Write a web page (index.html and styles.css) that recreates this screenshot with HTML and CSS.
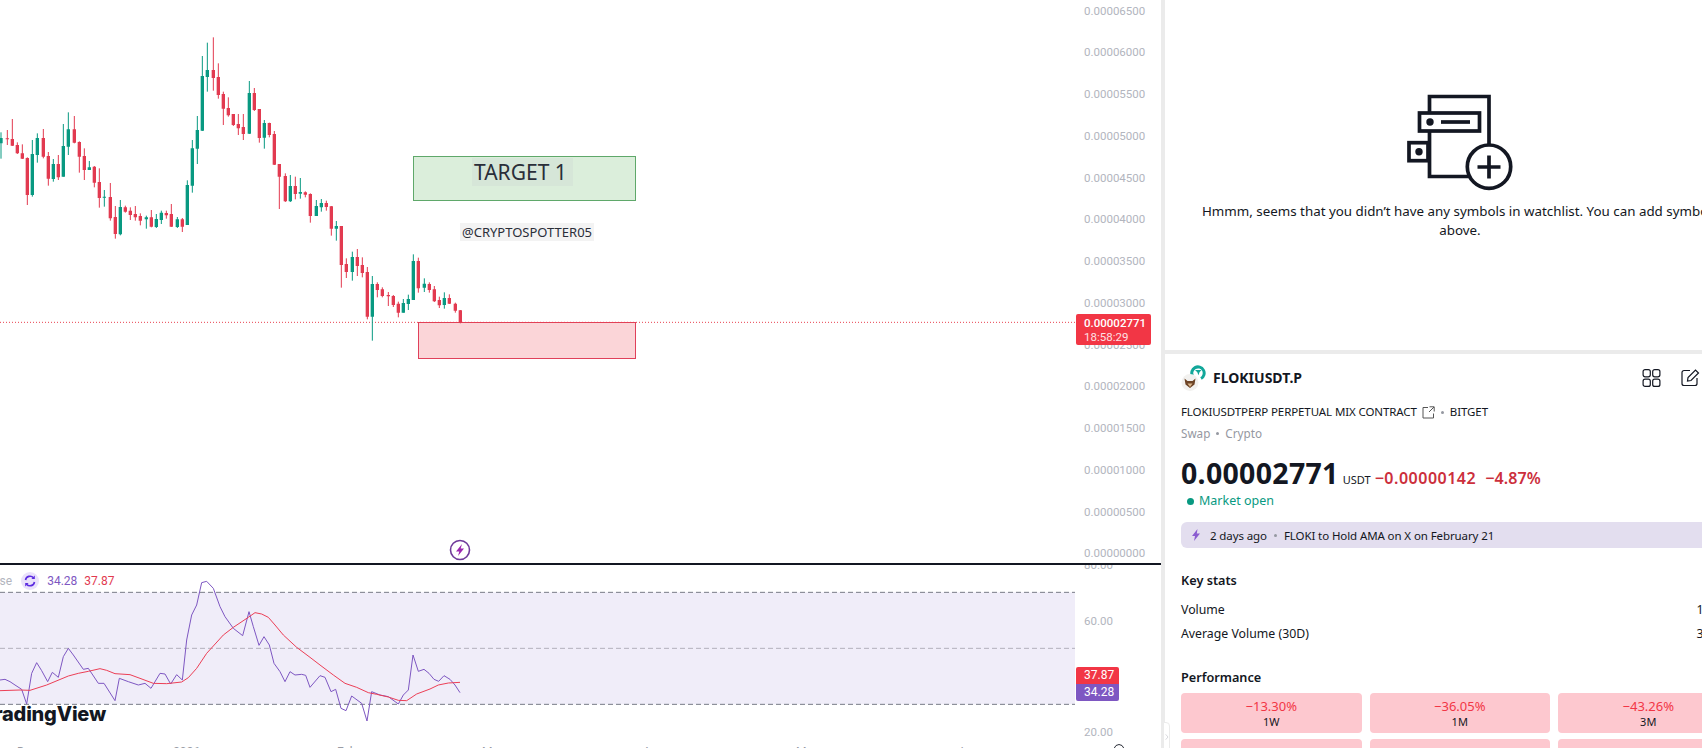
FILE: index.html
```html
<!DOCTYPE html>
<html lang="en">
<head>
<meta charset="utf-8">
<title>FLOKIUSDT.P chart</title>
<link rel="stylesheet" href="styles.css">
</head>
<body>
<div class="app">
  <section class="chart-col">
    <div class="main-pane">
      <div class="canvas">
        <div class="box box-green"></div>
        <div class="box box-red"></div>
        <svg class="plot" viewBox="0 0 3225 1689" aria-hidden="true">
          <line class="last-line" x1="0" y1="967" x2="3225" y2="967"/>
          <path class="wick up" d="M3 397V476M112 400V488M97 420V590M160 477V545M190 372V530M205 337V465M268 483V510M313 570V620M361 600V706M439 647V686M469 642V684M484 632V672M532 651V684M562 541V675M577 420V578M592 348V492M607 168V393M622 128V275M748 243V402M793 360V446M871 525V606M901 534V596M949 600V648M964 597V635M1009 663V722M1057 755V842M1117 828V1022M1210 897V938M1225 884V930M1240 763V900M1273 835V876M1333 877V926"/>
          <path class="body up" d="M3 414V430M97 462V585M112 414V465M160 492V537M190 438V530M205 388V440M268 502V510M313 590V593M361 621V703M439 652V658M469 657V681M484 638V660M532 658V681M562 555V675M577 445V557M592 390V446M607 228V392M622 210V231M748 279V401M793 369V413M871 558V604M901 576V581M949 618V648M964 609V622M1009 678V686M1057 771V816M1117 852V950M1210 909V938M1225 897V912M1240 783V900M1273 851V863M1333 894V915"/>
          <path class="wick down" d="M22 390V435M37 357V438M52 427V462M67 433V477M82 472V615M130 387V475M145 456V557M175 465V540M223 348V430M238 424V518M253 445V540M283 498V562M298 505V623M331 549V662M346 618V716M376 617V638M391 622V660M406 618V662M421 640V676M454 630V682M499 632V656M514 612V681M547 654V696M640 112V272M655 190V296M670 275V375M685 292V350M700 342V378M715 342V405M730 342V420M763 264V333M778 327V428M808 368V412M823 393V495M838 492V627M856 520V606M886 530V598M916 574V592M931 580V668M979 602V632M994 618V707M1024 678V863M1039 775V834M1072 747V828M1087 772V832M1102 801V958M1132 847V892M1147 862V892M1165 876V918M1180 885V921M1195 905V952M1255 773V878M1288 847V878M1303 858V906M1318 890V924M1348 883V912M1366 908V938M1381 930V970"/>
          <path class="body down" d="M22 415V418M37 417V437M52 435V460M67 460V476M82 474V585M130 414V470M145 468V536M175 492V532M223 388V428M238 426V470M253 468V510M283 500V548M298 546V594M331 591V655M346 651V702M376 622V635M391 632V645M406 642V652M421 648V662M454 652V680M499 639V646M514 642V680M547 658V680M640 210V234M655 231V285M670 282V326M685 324V346M700 342V375M715 372V385M730 381V402M763 279V330M778 327V414M808 369V405M823 402V494M838 492V530M856 528V604M886 558V582M916 577V584M931 582V648M979 609V621M994 619V686M1024 678V795M1039 792V816M1072 771V798M1087 795V819M1102 816V950M1132 852V870M1147 868V888M1165 885V889M1180 888V915M1195 911V938M1255 783V865M1288 852V870M1303 868V904M1318 900V916M1348 894V911M1366 911V932M1381 931V968"/>
        </svg>
        <span class="note note-target">TARGET 1</span>
        <span class="note note-handle">@CRYPTOSPOTTER05</span>
        <svg class="event" viewBox="0 0 22 22" aria-hidden="true">
          <circle cx="11" cy="11" r="9.5"/>
          <path d="M13 5 7 12.500h3.300L9 17l6-7.500h-3.300z"/>
        </svg>
      </div>
      <div class="price-axis">
        <span>0.00006500</span><span>0.00006000</span><span>0.00005500</span><span>0.00005000</span>
        <span>0.00004500</span><span>0.00004000</span><span>0.00003500</span><span>0.00003000</span>
        <span>0.00002500</span><span>0.00002000</span><span>0.00001500</span><span>0.00001000</span>
        <span>0.00000500</span><span>0.00000000</span>
        <div class="price-tag"><b>0.00002771</b><span>18:58:29</span></div>
      </div>
    </div>
    <div class="pane-sep"></div>
    <div class="rsi-pane">
      <div class="canvas">
        <svg class="plot" viewBox="0 75 3225 549" aria-hidden="true">
          <rect class="band" x="0" y="157" width="3225" height="336"/>
          <line class="dash dark" x1="0" y1="157" x2="3225" y2="157"/>
          <line class="dash light" x1="0" y1="325" x2="3225" y2="325"/>
          <line class="dash dark" x1="0" y1="493" x2="3225" y2="493"/>
          <polyline class="rsi" points="0,420 15,418 30,425 45,435 65,448 80,492 95,400 110,368 125,392 143,425 157,397 175,412 190,350 205,325 220,345 250,388 265,385 295,430 312,430 345,482 358,415 385,425 415,435 435,430 453,445 480,400 495,402 512,432 530,404 547,420 560,300 575,225 590,195 605,128 620,124 640,145 660,200 675,230 700,265 728,287 747,215 760,260 777,316 792,290 808,315 822,370 840,395 855,425 870,395 885,405 905,403 917,406 930,442 960,407 975,412 993,455 1007,448 1023,505 1038,512 1055,468 1085,490 1101,543 1115,455 1140,465 1165,470 1195,492 1210,465 1225,450 1239,345 1255,394 1272,388 1287,400 1302,418 1316,424 1332,407 1350,418 1365,435 1380,458"/>
          <polyline class="rsi-ma" points="0,452 30,451 60,450 90,451 140,435 205,408 235,400 265,394 300,386 320,391 345,401 390,404 420,415 460,430 500,431 545,426 565,413 590,385 620,340 670,285 700,262 745,232 765,218 785,222 805,232 825,255 850,285 890,322 930,352 960,375 1000,405 1035,430 1070,442 1105,458 1130,463 1165,471 1195,481 1220,482 1250,462 1290,447 1315,435 1345,429 1380,427"/>
        </svg>
        <div class="legend">
          <span class="legend-src">Close</span>
          <svg class="sync" viewBox="0 0 18 18" aria-hidden="true">
            <circle class="sync-bg" cx="9" cy="9" r="9"/>
            <path class="sync-arc" d="M4.500 8a4.600 4.600 0 0 1 8-2.200M13.500 10a4.600 4.600 0 0 1-8 2.200"/>
            <path class="sync-tip" d="M13.800 3.600v3.400h-3.400zM4.200 14.400V11h3.400z"/>
          </svg>
          <span class="legend-rsi">34.28</span>
          <span class="legend-ma">37.87</span>
        </div>
        <div class="watermark">TradingView</div>
        <div class="time-axis">
          <span class="t-dec">Dec</span><span class="t-2026">2026</span><span class="t-feb">Feb</span>
          <span class="t-mar">Mar</span><span class="t-apr">Apr</span><span class="t-may">May</span><span class="t-jun">Jun</span>
        </div>
      </div>
      <div class="rsi-axis">
        <span>80.00</span><span>60.00</span><span>40.00</span><span>20.00</span>
        <div class="rsi-tags"><span class="tag-ma">37.87</span><span class="tag-rsi">34.28</span></div>
        <svg class="gear" viewBox="0 0 12 12" aria-hidden="true"><path d="M3 1.500 6 .5l3 1 2 3v7H1v-7z"/></svg>
      </div>
    </div>
  </section>
  <div class="v-divider"><div class="collapse"><svg viewBox="0 0 6 10" aria-hidden="true"><path d="M1 1l3.500 4L1 9"/></svg></div></div>
  <aside class="side">
    <section class="watchlist">
      <svg class="empty-icon" viewBox="0 0 108 98" aria-hidden="true">
        <path class="ei" d="M22.500 46V3.500H82v60M22.500 46V83.500H66"/>
        <rect class="ei fillw" x="12.500" y="20" width="60" height="18"/>
        <circle class="ed" cx="23" cy="29" r="3.700"/>
        <path class="ei" d="M34 29H63"/>
        <rect class="ei" x="2" y="49.700" width="19" height="18"/>
        <circle class="ed" cx="12" cy="58.700" r="3.700"/>
        <circle class="ei fillw" cx="82" cy="73.700" r="21.700"/>
        <path class="ei" d="M70.500 74H93.500M82 62.500V85.500"/>
      </svg>
      <p class="empty-msg">Hmmm, seems that you didn’t have any symbols in watchlist. You can add symbols above.</p>
    </section>
    <div class="h-divider"></div>
    <section class="details">
      <header class="sym-row">
        <svg class="sym-logo" viewBox="0 0 26 26" aria-hidden="true">
          <path class="logo-ring" d="M11.500 11a6.200 6.200 0 1 1 8.500 2.500"/>
          <path class="logo-arrow" d="M14 5h6.500l-2 2.200-1 3-1.200-3z"/>
          <circle cx="9" cy="17.500" r="8.500" fill="#f2f1ef"/>
          <path d="M3.500 13.500 6.500 16h5l3-2.500-1 6L9 23l-4.500-3.500z" fill="#6e4427"/>
          <path d="M6.500 18.500h5L9 22z" fill="#d9b68c"/>
        </svg>
        <h2 class="sym-name">FLOKIUSDT.P</h2>
        <div class="sym-actions">
          <svg class="act" viewBox="0 0 18 18" aria-hidden="true"><rect x=".6" y=".6" width="7.200" height="7.200" rx="2"/><rect x="10.200" y=".6" width="7.200" height="7.200" rx="2"/><rect x=".6" y="10.200" width="7.200" height="7.200" rx="2"/><rect x="10.200" y="10.200" width="7.200" height="7.200" rx="2"/></svg>
          <svg class="act" viewBox="0 0 19 18" aria-hidden="true"><path d="M9 1.500H3a2 2 0 0 0-2 2v11a2 2 0 0 0 2 2h11a2 2 0 0 0 2-2V9"/><path d="M6.500 12 7 8.500 14.500 1l3 3L10 11.500z"/></svg>
        </div>
      </header>
      <div class="contract">
        <span>FLOKIUSDTPERP PERPETUAL MIX CONTRACT</span>
        <svg class="ext" viewBox="0 0 13 13" aria-hidden="true"><path d="M6 1.500H1v10.500h10.500V7.500M7.500.8h4.700v4.700M12 1 7 6"/></svg>
        <i class="dot"></i>
        <span>BITGET</span>
      </div>
      <div class="type"><span>Swap</span><i class="dot"></i><span>Crypto</span></div>
      <div class="quote">
        <span class="last">0.00002771</span>
        <span class="ccy">USDT</span>
        <span class="chg">−0.00000142</span>
        <span class="chg">−4.87%</span>
      </div>
      <div class="status"><i></i>Market open</div>
      <div class="news">
        <svg class="bolt" viewBox="0 0 8 12" aria-hidden="true"><path d="M5.500 0 0 7h3l-1 5 6-7.500H4.800z"/></svg>
        <span>2 days ago</span><i class="dot"></i><span>FLOKI to Hold AMA on X on February 21</span>
      </div>
      <h3 class="sec-title">Key stats</h3>
      <div class="stat"><span>Volume</span><span>15.36 B</span></div>
      <div class="stat"><span>Average Volume (30D)</span><span>39.52 B</span></div>
      <h3 class="sec-title perf-title">Performance</h3>
      <div class="perf-grid">
        <div class="perf"><b>−13.30%</b><span>1W</span></div>
        <div class="perf"><b>−36.05%</b><span>1M</span></div>
        <div class="perf"><b>−43.26%</b><span>3M</span></div>
        <div class="perf"></div>
        <div class="perf"></div>
        <div class="perf"></div>
      </div>
    </section>
  </aside>
</div>
</body>
</html>
```
FILE: styles.css
```css
* { box-sizing: border-box; }
html, body { margin: 0; height: 100%; overflow: hidden; background: #fff; }
body { font-family: "Noto Sans", sans-serif; color: #131722; }

.app { display: flex; width: 1702px; height: 748px; overflow: hidden; }

/* chart column */
.chart-col { flex: 0 0 1161px; display: flex; flex-direction: column; height: 748px; }
.main-pane { flex: 0 0 563px; display: flex; }
.pane-sep { flex: 0 0 2px; background: #131722; }
.rsi-pane { flex: 1; display: flex; overflow: hidden; }
.canvas { position: relative; flex: 0 0 1075px; overflow: hidden; }
.plot { position: absolute; inset: 0; width: 100%; height: 100%; }

.last-line { stroke: #e8404f; stroke-width: 3; stroke-dasharray: 3 6; }
.wick { fill: none; stroke-width: 3; }
.body { fill: none; stroke-width: 10; }
.up { stroke: #089981; }
.down { stroke: #e23a50; }

.box { position: absolute; left: 413px; width: 223px; }
.box-green { top: 156px; height: 45px; background: #dbeedb; border: 1px solid #5fa86a; }
.box-red { top: 322px; left: 418px; width: 218px; height: 37px; background: #fbd5d8; border: 1px solid #e0405a; }

.note { position: absolute; white-space: nowrap; color: #2a2e39; }
.note-target { top: 158px; left: 472px; padding: 0 6px 0 2px; font-size: 21px; line-height: 28px; background: #d6e6d8; }
.note-handle { top: 223px; left: 460px; padding: 0 2px; font-size: 13px; line-height: 18px; background: #f3f3f3; }

.event { position: absolute; left: 449px; top: 539px; width: 22px; height: 22px; }
.event circle { fill: #fff; stroke: #6f3a9a; stroke-width: 1.6; }
.event path { fill: #9c27b0; }

/* price axis */
.price-axis { position: relative; flex: 1; display: flex; flex-direction: column; gap: 27.75px; padding: 3.7px 0 0 9px;
  font: 11.5px/14px Roboto, sans-serif; color: #b2b5be; }
.price-tag { position: absolute; left: 1px; top: 314px; width: 75px; height: 31px; padding: 3px 0 0 8px; background: #f23645; border-radius: 2px;
  color: #fff; display: flex; flex-direction: column; line-height: 13.5px; }
.price-tag b { font-weight: 500; }
.price-tag span { color: #fde0e3; }

/* RSI pane */
.band { fill: #f0edf9; }
.dash { stroke-width: 3; stroke-dasharray: 15 9; }
.dark { stroke: #787b86; }
.light { stroke: #b2b0bc; }
.rsi { fill: none; stroke: #7e57c2; stroke-width: 3; }
.rsi-ma { fill: none; stroke: #ec3f56; stroke-width: 3; }

.legend { position: absolute; left: -18px; top: 7px; display: flex; align-items: center; gap: 7px; font: 12px/14px Roboto, sans-serif; }
.legend-src { color: #b2b5be; }
.sync { width: 18px; height: 18px; margin: 0 1px 0 2px; }
.sync-bg { fill: #e9e1fb; }
.sync-arc { fill: none; stroke: #5b2be0; stroke-width: 1.6; }
.sync-tip { fill: #5b2be0; }
.legend-rsi { color: #7e57c2; }
.legend-ma { color: #e23a50; }

.watermark { position: absolute; right: calc(100% - 106px); top: 136px; font: 800 20px/26px Inter, sans-serif; color: #131722; white-space: nowrap; letter-spacing: -.2px; }

.time-axis { position: absolute; inset: 180px 0 auto 0; height: 14px; font: 12px/14px Roboto, sans-serif; color: #999ca5; }
.time-axis span { position: absolute; top: 0; }
.t-dec { left: 17px; }
.t-2026 { left: 173px; }
.t-feb { left: 337px; }
.t-mar { left: 482px; }
.t-apr { left: 643px; }
.t-may { left: 796px; }
.t-jun { left: 957px; }

.rsi-axis { position: relative; flex: 1; display: flex; flex-direction: column; gap: 41.7px; padding-left: 9px; margin-top: -7px;
  font: 11.5px/14px Roboto, sans-serif; color: #b2b5be; }
.rsi-tags { position: absolute; left: 1px; top: 109px; width: 43px; display: flex; flex-direction: column; color: #fff; font-size: 12px; }
.rsi-tags span { height: 17px; line-height: 17px; padding-left: 8px; }
.tag-ma { background: #f23645; border-radius: 2px 2px 0 0; }
.tag-rsi { background: #7e57c2; border-radius: 0 0 2px 2px; }
.gear { position: absolute; left: 38px; top: 186px; width: 12px; height: 12px; fill: none; stroke: #2a2e39; stroke-width: 1; }

/* dividers */
.v-divider { position: relative; flex: 0 0 4px; background: #ebebeb; }
.h-divider { flex: 0 0 4px; background: #ebebeb; }
.collapse { position: absolute; left: 2px; top: 722px; width: 7px; height: 30px; background: #fff; border: 1px solid #ebebeb; border-radius: 0 4px 4px 0; display: flex; align-items: center; justify-content: center; }
.collapse svg { width: 4px; height: 8px; fill: none; stroke: #c4c6cc; stroke-width: 1; }

/* side panel */
.side { flex: 0 0 590px; display: flex; flex-direction: column; height: 748px; }
.watchlist { flex: 0 0 350px; display: flex; flex-direction: column; align-items: center; padding-top: 93px; }
.empty-icon { width: 108px; height: 98px; flex: none; margin-right: -2px; }
.ei { fill: none; stroke: #131722; stroke-width: 3.7; }
.fillw { fill: #fff; }
.ed { fill: #131722; }
.empty-msg { margin: 11px 0 0; width: 558px; text-align: center; font-size: 13.35px; line-height: 19px; }

.details { padding: 11px 16px 0; flex: 1; }
.sym-row { display: flex; align-items: center; height: 26px; }
.sym-logo { width: 26px; height: 26px; flex: none; }
.logo-ring { fill: none; stroke: #12a79a; stroke-width: 3; }
.logo-arrow { fill: #12a79a; }
.sym-name { margin: 0 0 0 6px; font-size: 14px; font-weight: 700; line-height: 20px; }
.sym-actions { position: absolute; left: 1642px; top: 369px; display: flex; gap: 20px; }
.act { width: 19px; height: 18px; fill: none; stroke: #131722; stroke-width: 1.2; }

.contract { display: flex; align-items: center; gap: 5px; margin-top: 13px; font-size: 11.5px; line-height: 16px; letter-spacing: -.1px; }
.ext { width: 13px; height: 13px; fill: none; stroke: #555; stroke-width: 1; }
.dot { width: 3px; height: 3px; border-radius: 50%; background: #9598a1; margin: 0 1px; }
.type { display: flex; align-items: center; gap: 5px; margin-top: 5px; font-size: 11.7px; line-height: 16px; color: #9598a1; }

.quote { display: flex; align-items: baseline; margin-top: 14px; line-height: 37px; height: 37px; }
.last { font-size: 28.5px; font-weight: 700; letter-spacing: .3px; }
.ccy { margin-left: 4px; font-size: 11px; }
.chg { margin-left: 4px; font-size: 16px; font-weight: 600; letter-spacing: .5px; color: #cc2f3c; }
.chg + .chg { margin-left: 9px; letter-spacing: .1px; }
.status { display: flex; align-items: center; gap: 5px; margin: 0 0 0 6px; font-size: 12.5px; line-height: 18px; color: #089981; }
.status i { width: 7px; height: 7px; border-radius: 50%; background: #089981; }

.news { display: flex; align-items: center; gap: 6px; height: 26px; margin-top: 12px; padding-left: 11px; background: #e3deef; border-radius: 6px; font-size: 11.5px; letter-spacing: -.1px; }
.bolt { width: 8px; height: 12px; margin-right: 4px; fill: #8a5cd0; }

.sec-title { margin: 23px 0 0; font-size: 12.7px; font-weight: 600; line-height: 18px; }
.stat { display: flex; justify-content: space-between; margin-top: 6px; font-size: 12.3px; line-height: 18px; }
.sec-title + .stat { margin-top: 12px; }
.perf-title { margin-top: 25px; }
.perf-grid { display: grid; grid-template-columns: repeat(3, 180.5px); grid-auto-rows: 40px; gap: 6px 8px; margin-top: 7px; }
.perf { display: flex; flex-direction: column; align-items: center; justify-content: center; background: #fdc8cf; border-radius: 4px; font-size: 11px; line-height: 14px; }
.perf b { font-size: 13px; font-weight: 400; line-height: 18px; color: #f23645; }
```
